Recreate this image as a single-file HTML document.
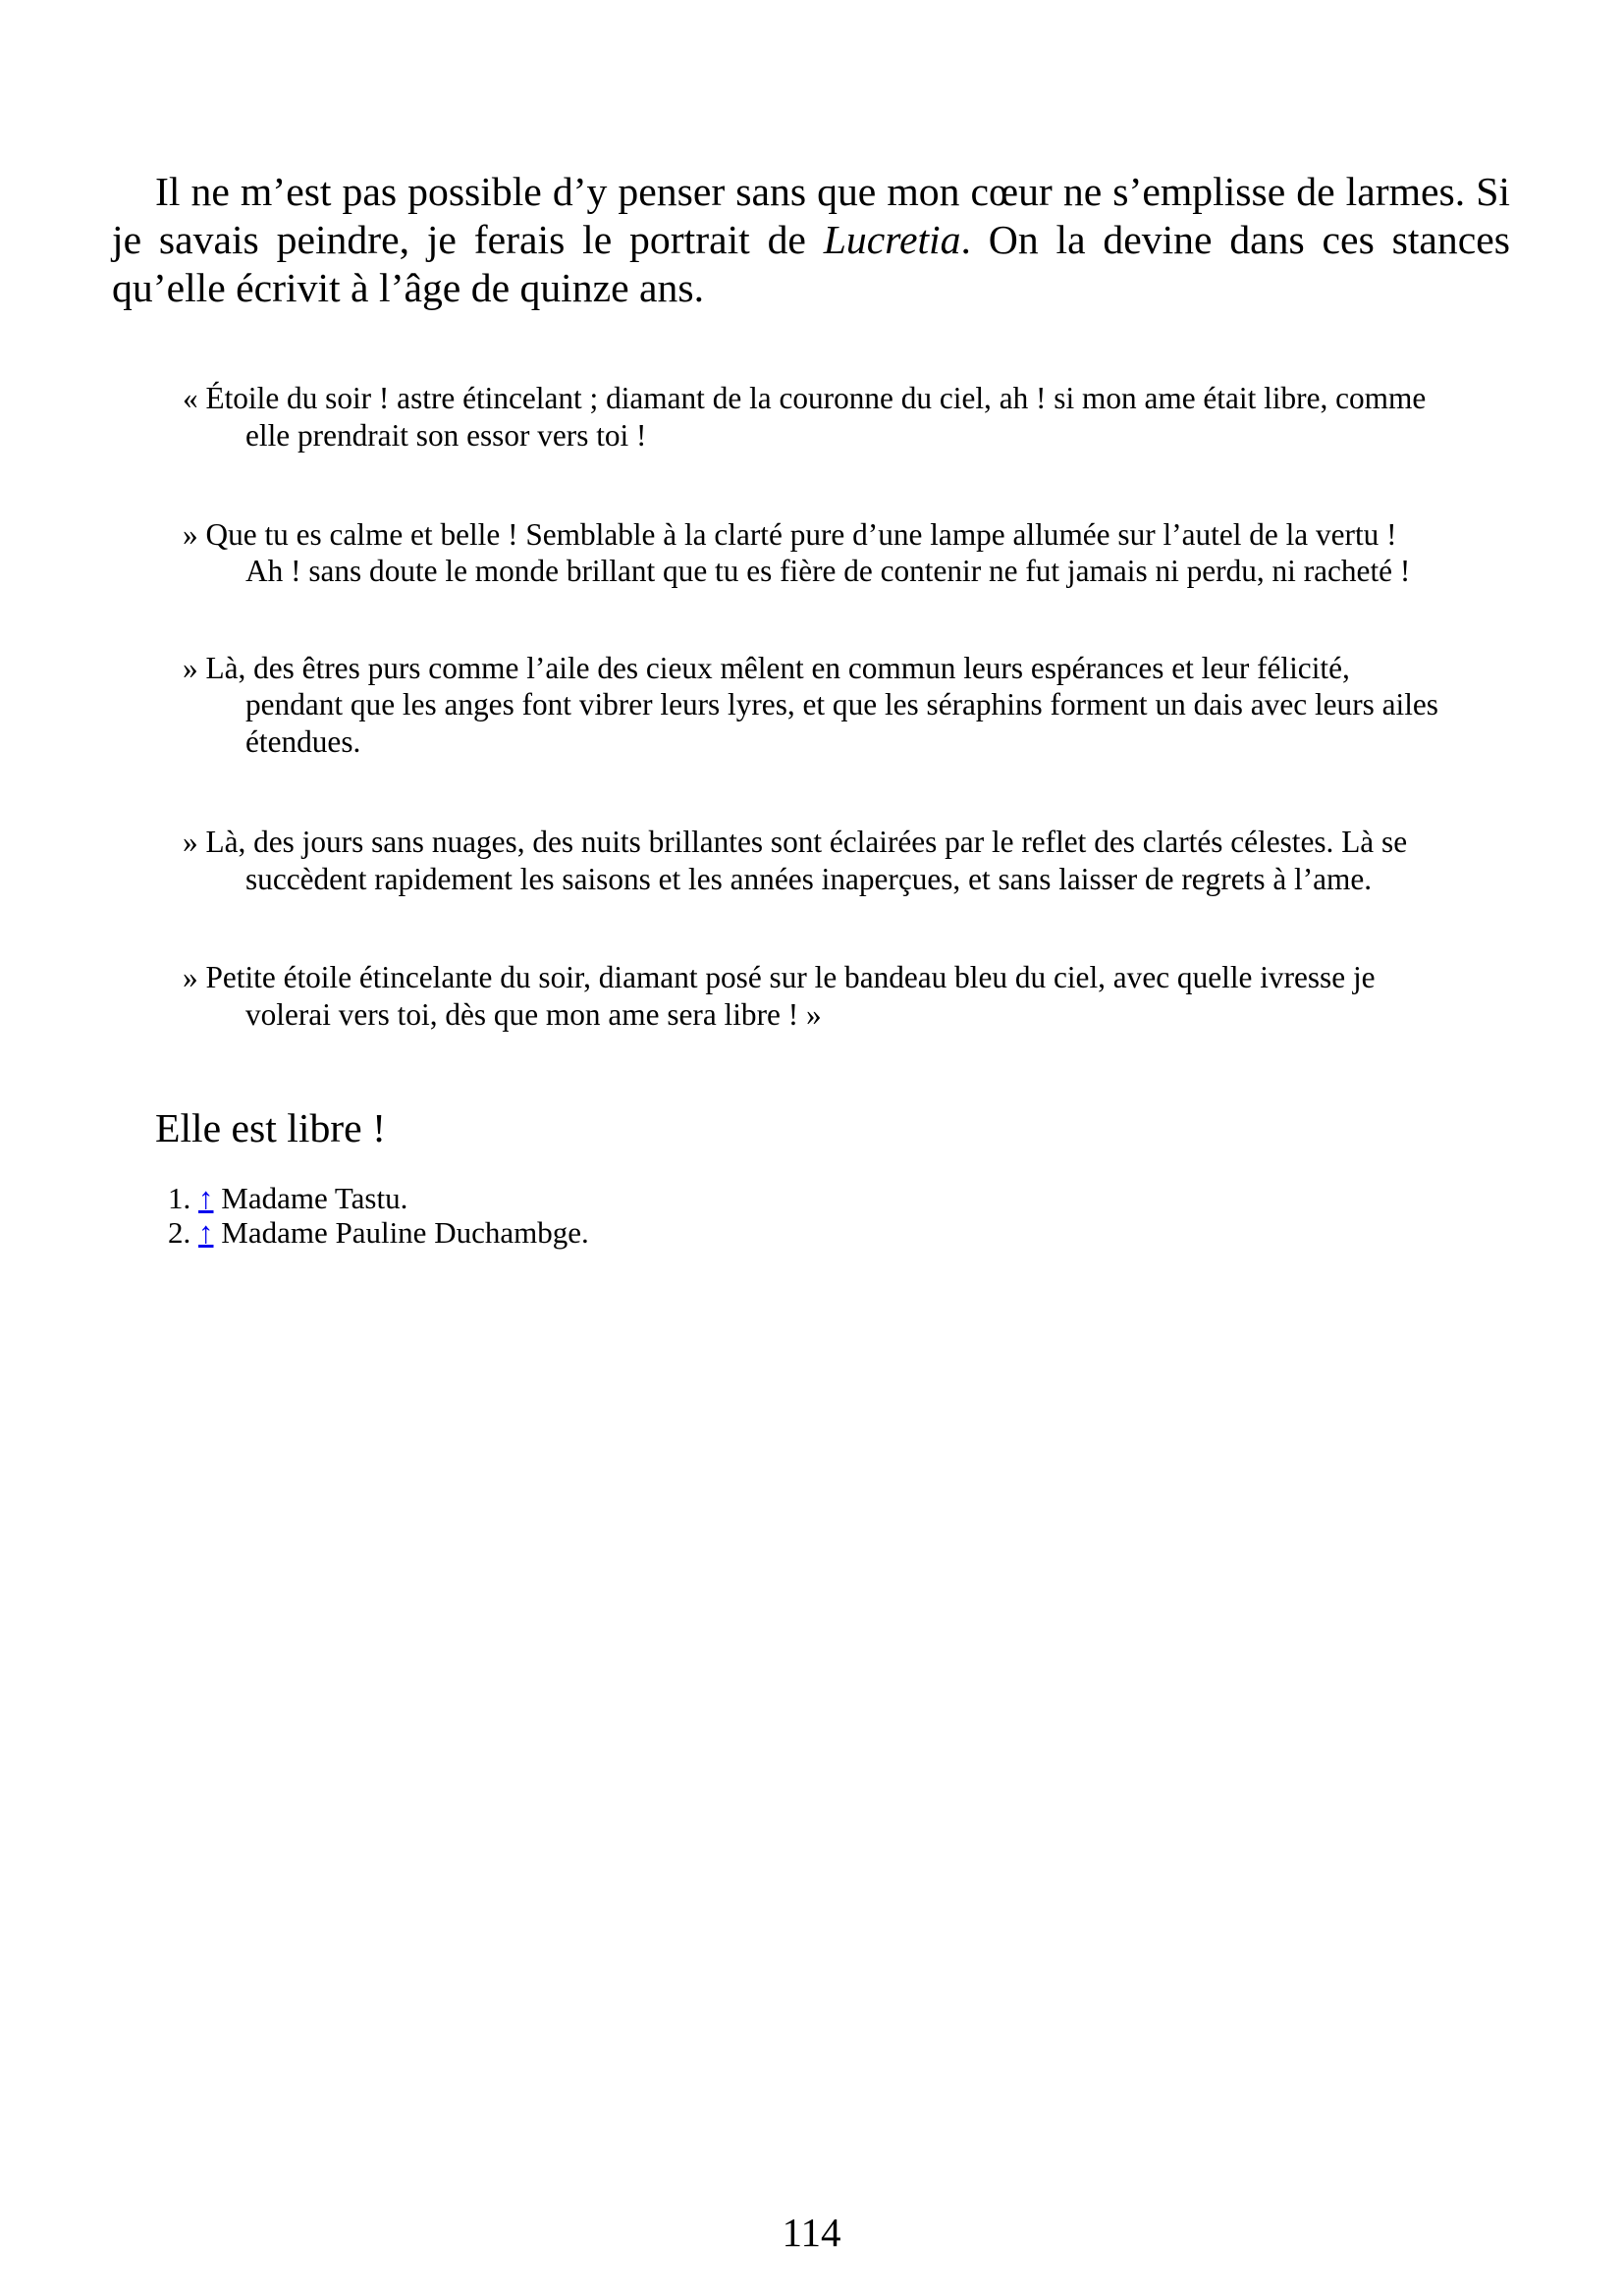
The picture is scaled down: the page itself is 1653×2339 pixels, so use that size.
<!DOCTYPE html>
<html><head><meta charset="utf-8"><style>
html,body{margin:0;padding:0;background:#fff;}
body{width:1653px;height:2339px;position:relative;overflow:hidden;font-family:"Liberation Serif",serif;color:#000;}
.l{position:absolute;white-space:nowrap;}
.m{font-size:41.7px;line-height:49px;}
.j{text-align:justify;text-align-last:justify;}
.q{font-size:31.3px;line-height:38px;}
.f{font-size:31px;line-height:35px;}
a{color:#0000ee;text-decoration:underline;}
</style></head><body>
<div class="l m j" style="left:158px;top:172px;width:1380px;">Il ne m’est pas possible d’y penser sans que mon cœur ne s’emplisse de larmes. Si</div>
<div class="l m j" style="left:114px;top:221px;width:1424px;">je savais peindre, je ferais le portrait de <i>Lucretia</i>. On la devine dans ces stances</div>
<div class="l m" style="left:114px;top:270px;">qu’elle écrivit à l’âge de quinze ans.</div>

<div class="l q" style="left:186px;top:387px;">« Étoile du soir ! astre étincelant ; diamant de la couronne du ciel, ah ! si mon ame était libre, comme</div>
<div class="l q" style="left:250px;top:425px;">elle prendrait son essor vers toi !</div>

<div class="l q" style="left:186px;top:526px;">» Que tu es calme et belle ! Semblable à la clarté pure d’une lampe allumée sur l’autel de la vertu !</div>
<div class="l q" style="left:250px;top:563px;">Ah ! sans doute le monde brillant que tu es fière de contenir ne fut jamais ni perdu, ni racheté !</div>

<div class="l q" style="left:186px;top:662px;">» Là, des êtres purs comme l’aile des cieux mêlent en commun leurs espérances et leur félicité,</div>
<div class="l q" style="left:250px;top:699px;">pendant que les anges font vibrer leurs lyres, et que les séraphins forment un dais avec leurs ailes</div>
<div class="l q" style="left:250px;top:737px;">étendues.</div>

<div class="l q" style="left:186px;top:839px;">» Là, des jours sans nuages, des nuits brillantes sont éclairées par le reflet des clartés célestes. Là se</div>
<div class="l q" style="left:250px;top:877px;">succèdent rapidement les saisons et les années inaperçues, et sans laisser de regrets à l’ame.</div>

<div class="l q" style="left:186px;top:977px;">» Petite étoile étincelante du soir, diamant posé sur le bandeau bleu du ciel, avec quelle ivresse je</div>
<div class="l q" style="left:250px;top:1015px;">volerai vers toi, dès que mon ame sera libre ! »</div>

<div class="l m" style="left:158px;top:1126px;">Elle est libre !</div>

<div class="l f" style="left:171px;top:1203px;">1. <a>↑</a> Madame Tastu.</div>
<div class="l f" style="left:171px;top:1238px;">2. <a>↑</a> Madame Pauline Duchambge.</div>

<div class="l" style="left:0;width:1653px;text-align:center;top:2251px;font-size:41px;line-height:47px;">114</div>
</body></html>
